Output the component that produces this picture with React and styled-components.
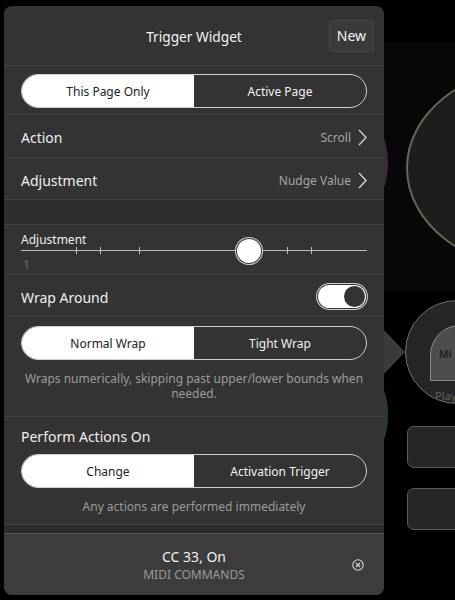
import React from 'react';
import styled, { createGlobalStyle } from 'styled-components';

const GlobalStyle = createGlobalStyle`
  html, body {
    margin: 0;
    padding: 0;
    background: #000;
    overflow: hidden;
  }
  body {
    font-family: "Noto Sans", "Open Sans", sans-serif;
  }
`;

const Stage = styled.div`
  position: relative;
  width: 455px;
  height: 600px;
  overflow: hidden;
  background: #000;
`;

// things behind the popover
const BigDial = styled.div`
  position: absolute;
  left: 406px;
  top: 66px;
  width: 260px;
  height: 200px;
  border-radius: 50%;
  background: #1d1d1d;
  border: 2px solid #6a6650;
`;

const TopStrip = styled.div`
  position: absolute;
  left: 384px;
  top: 42px;
  width: 71px;
  height: 250px;
  background: #070707;
`;

const Glow = styled.div`
  position: absolute;
  left: 360px;
  top: ${(p) => p.top}px;
  width: 28px;
  height: ${(p) => p.h}px;
  border-radius: 50%;
  background: ${(p) => p.color};
`;

const SmallDial = styled.div`
  position: absolute;
  left: 405px;
  top: 300px;
  width: 104px;
  height: 104px;
  border-radius: 50%;
  background: #262626;
  border: 1px solid #6e6e6e;
  box-sizing: border-box;
  overflow: hidden;
`;

const DialArch = styled.div`
  position: absolute;
  left: 24px;
  top: 24px;
  width: 70px;
  height: 56px;
  border-radius: 30px 30px 0 0;
  background: #4d4d4d;
  border: 1px solid #8a8a8a;
  color: #222;
  font-size: 10px;
  font-weight: 700;
  padding: 21px 0 0 8px;
  box-sizing: border-box;
`;

const DialLabel = styled.div`
  position: absolute;
  left: 29px;
  top: 88px;
  color: #5e5e5e;
  font-size: 11px;
  line-height: 14px;
`;

const Pointer = styled.div`
  position: absolute;
  left: 384px;
  top: 330px;
  width: 0;
  height: 0;
  border-top: 22px solid transparent;
  border-bottom: 22px solid transparent;
  border-left: 21px solid #3a3a3a;
`;

const SideButton = styled.div`
  position: absolute;
  left: 407px;
  top: ${(p) => p.top}px;
  width: 70px;
  height: 40px;
  border-radius: 7px;
  background: #262626;
  border: 1px solid #5a5a5a;
`;

const Panel = styled.div`
  position: absolute;
  left: 4px;
  top: 6px;
  width: 380px;
  height: 589px;
  background: #333;
  border-radius: 8px;
  overflow: hidden;
  display: flex;
  flex-direction: column;
  color: #fff;
`;

const Header = styled.div`
  height: 60px;
  box-sizing: border-box;
  display: grid;
  grid-template-columns: 1fr auto 1fr;
  align-items: center;
  border-bottom: 1px solid #444;
  flex-shrink: 0;
`;

const Title = styled.div`
  grid-column: 2;
  font-size: 13.7px;
  color: #f2f2f2;
  padding-top: 1px;
`;

const NewButton = styled.div`
  grid-column: 3;
  justify-self: end;
  margin-right: 10px;
  width: 45px;
  height: 32px;
  box-sizing: border-box;
  border: 1px solid #454545;
  background: #3a3a3a;
  border-radius: 3px;
  display: flex;
  align-items: center;
  justify-content: center;
  font-size: 14px;
  color: #f2f2f2;
`;

const Section = styled.div`
  padding: ${(p) => p.pad || '0 17px'};
  border-bottom: 1px solid #424242;
  flex-shrink: 0;
  box-sizing: border-box;
  height: ${(p) => p.h}px;
`;

const Segmented = styled.div`
  display: grid;
  grid-template-columns: 1fr 1fr;
  height: 34px;
  border-radius: 17px;
  border: 1px solid #cfcfcf;
  box-sizing: border-box;
  overflow: hidden;
`;

const Segment = styled.div`
  display: flex;
  align-items: center;
  justify-content: center;
  font-size: 12px;
  padding-top: 1px;
  background: ${(p) => (p.active ? '#fff' : 'transparent')};
  color: ${(p) => (p.active ? '#222' : '#f2f2f2')};
`;

const NavRow = styled.div`
  height: ${(p) => p.h || 43}px;
  box-sizing: border-box;
  display: flex;
  align-items: center;
  padding: ${(p) => p.top || 3}px 17px 0;
  border-bottom: 1px solid #424242;
  flex-shrink: 0;
`;

const RowLabel = styled.div`
  flex: 1;
  font-size: 14px;
  color: #f0f0f0;
`;

const RowValue = styled.div`
  font-size: 12px;
  color: #a5a5a5;
  margin-right: 7px;
`;

const Gap = styled.div`
  height: 25px;
  box-sizing: border-box;
  background: #2e2e2e;
  border-bottom: 1px solid #424242;
  flex-shrink: 0;
`;

const SliderLabel = styled.div`
  font-size: 12px;
  color: #eee;
  padding-top: 7px;
  line-height: 16px;
`;

const Track = styled.div`
  position: relative;
  height: 14px;
  margin-top: -4px;
`;

const Line = styled.div`
  position: absolute;
  left: 0;
  right: 0;
  top: 6px;
  height: 1px;
  background: #bdbdbd;
`;

const Tick = styled.div`
  position: absolute;
  top: 3px;
  width: 1px;
  height: 7px;
  background: #bdbdbd;
`;

const Thumb = styled.div`
  position: absolute;
  top: -5px;
  width: 24px;
  height: 24px;
  margin-left: -12px;
  border-radius: 50%;
  background: #fff;
  box-sizing: border-box;
  box-shadow: 0 0 0 1px #333, 0 0 0 2px #cfcfcf;
`;

const SliderValue = styled.div`
  font-size: 12px;
  color: #6f6f6f;
  padding-left: 2px;
  line-height: 14px;
`;

const Toggle = styled.div`
  width: 48px;
  height: 23px;
  margin-right: 1px;
  margin-top: -2px;
  border-radius: 12px;
  background: #fff;
  box-shadow: 0 0 0 1px #333, 0 0 0 2px #cfcfcf;
  display: flex;
  align-items: center;
  justify-content: flex-end;
  padding: 0 1px;
  box-sizing: border-box;
`;

const Knob = styled.div`
  width: 21px;
  height: 21px;
  border-radius: 50%;
  background: #333;
`;

const Note = styled.div`
  font-size: 12px;
  color: #9c9c9c;
  text-align: center;
  line-height: 15px;
  margin-top: 11px;
`;

const SectionTitle = styled.div`
  font-size: 14px;
  color: #f0f0f0;
  line-height: 20px;
  margin: 10px 0 7px;
`;

const Band = styled.div`
  height: 9px;
  box-sizing: border-box;
  background: #2c2c2c;
  border-bottom: 1px solid #555;
  flex-shrink: 0;
`;

const Footer = styled.div`
  flex: 1;
  background: #3c3c3c;
  display: grid;
  grid-template-columns: 1fr auto 1fr;
  align-items: center;
`;

const FooterText = styled.div`
  grid-column: 2;
  text-align: center;
  margin-top: 1px;
`;

const Command = styled.div`
  font-size: 14px;
  color: #f2f2f2;
  line-height: 20px;
`;

const Kind = styled.div`
  font-size: 12px;
  color: #9a9a9a;
  line-height: 16px;
`;

const Close = styled.div`
  grid-column: 3;
  justify-self: end;
  margin-right: 20px;
  display: flex;
`;

const Chevron = () => (
  <svg width="9" height="17" viewBox="0 0 9 17">
    <path d="M1 1 L8 8.5 L1 16" fill="none" stroke="#d0d0d0" strokeWidth="1.4" />
  </svg>
);

const CloseIcon = () => (
  <svg width="12" height="12" viewBox="0 0 12 12">
    <circle cx="6" cy="6" r="5.2" fill="none" stroke="#d8d8d8" strokeWidth="1.1" />
    <path d="M4 4 L8 8 M8 4 L4 8" stroke="#d8d8d8" strokeWidth="1.1" />
  </svg>
);

const ticks = [55, 79, 118, 266, 290];

export default function App() {
  return (
    <Stage>
      <GlobalStyle />
      <TopStrip />
      <BigDial />
      <Glow top={128} h={70} color="#3a2a3a" />
      <Glow top={380} h={70} color="#2a3a36" />
      <SmallDial>
        <DialArch>Mi</DialArch>
        <DialLabel>Play</DialLabel>
      </SmallDial>
      <SideButton top={426} />
      <SideButton top={488} />
      <Pointer />
      <Panel>
        <Header>
          <Title>Trigger Widget</Title>
          <NewButton>New</NewButton>
        </Header>
        <Section pad="8px 17px 0" h={49}>
          <Segmented>
            <Segment active>This Page Only</Segment>
            <Segment>Active Page</Segment>
          </Segmented>
        </Section>
        <NavRow>
          <RowLabel>Action</RowLabel>
          <RowValue>Scroll</RowValue>
          <Chevron />
        </NavRow>
        <NavRow h={42}>
          <RowLabel>Adjustment</RowLabel>
          <RowValue>Nudge Value</RowValue>
          <Chevron />
        </NavRow>
        <Gap />
        <Section h={50}>
          <SliderLabel>Adjustment</SliderLabel>
          <Track>
            <Line />
            {ticks.map((t) => (
              <Tick key={t} style={{ left: t }} />
            ))}
            <Thumb style={{ left: 228 }} />
          </Track>
          <SliderValue>1</SliderValue>
        </Section>
        <NavRow h={41} top={5}>
          <RowLabel>Wrap Around</RowLabel>
          <Toggle>
            <Knob />
          </Toggle>
        </NavRow>
        <Section pad="10px 17px 0" h={101}>
          <Segmented>
            <Segment active>Normal Wrap</Segment>
            <Segment>Tight Wrap</Segment>
          </Segmented>
          <Note>Wraps numerically, skipping past upper/lower bounds when needed.</Note>
        </Section>
        <Section h={108}>
          <SectionTitle>Perform Actions On</SectionTitle>
          <Segmented>
            <Segment active>Change</Segment>
            <Segment>Activation Trigger</Segment>
          </Segmented>
          <Note>Any actions are performed immediately</Note>
        </Section>
        <Band />
        <Footer>
          <FooterText>
            <Command>CC 33, On</Command>
            <Kind>MIDI COMMANDS</Kind>
          </FooterText>
          <Close>
            <CloseIcon />
          </Close>
        </Footer>
      </Panel>
    </Stage>
  );
}
